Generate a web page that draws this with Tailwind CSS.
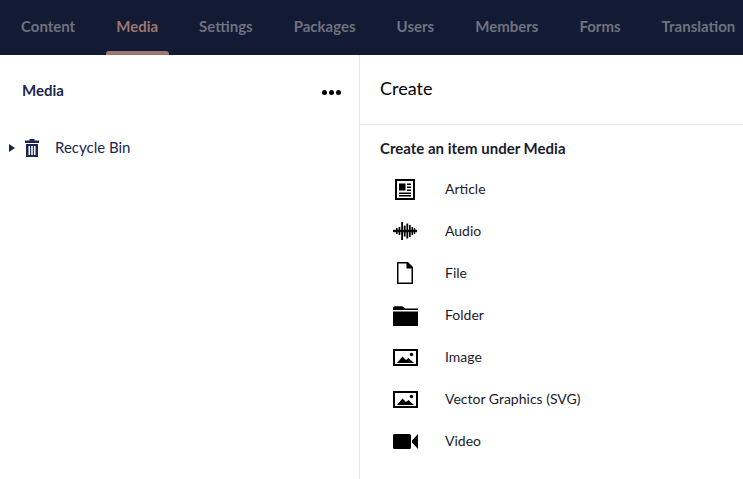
<!DOCTYPE html>
<html lang="en">

<head>
    <meta charset="UTF-8">
    <title>Media</title>
    <script src="https://cdn.jsdelivr.net/npm/@tailwindcss/browser@4"></script>
</head>

<body class="bg-white w-[743px] h-[479px] overflow-hidden font-['Lato',sans-serif] text-[#000000]">

    <!-- Top nav -->
    <nav class="h-[55px] pl-[0.5px] bg-[#131a33] flex text-[15px] font-bold text-[#6f7280] overflow-hidden whitespace-nowrap">
        <a class="px-[20.5px] leading-[52px]">Content</a>
        <a class="relative px-[20.5px] leading-[52px] text-[#9c7670]">Media
            <span class="absolute left-[10px] right-[10px] bottom-0 h-[4px] bg-[#9c7670] rounded-t-[3px]"></span>
        </a>
        <a class="px-[20.5px] leading-[52px]">Settings</a>
        <a class="px-[20.5px] leading-[52px]">Packages</a>
        <a class="px-[20.5px] leading-[52px]">Users</a>
        <a class="px-[20.5px] leading-[52px]">Members</a>
        <a class="px-[20.5px] leading-[52px]">Forms</a>
        <a class="px-[20.5px] leading-[52px]">Translation</a>
    </nav>

    <div class="flex h-[424px]">
        <!-- Tree -->
        <aside class="w-[360px] border-r border-[#e9e9eb] text-[#1b264f]">
            <div class="h-[72px] pl-[22px] pr-[18px] flex items-center justify-between">
                <span class="text-[15px] font-bold mb-[2px]">Media</span>
                <span class="flex gap-[2px] mt-[3px]">
                    <i class="w-[5px] h-[5px] rounded-full bg-black"></i>
                    <i class="w-[5px] h-[5px] rounded-full bg-black"></i>
                    <i class="w-[5px] h-[5px] rounded-full bg-black"></i>
                </span>
            </div>
            <div class="h-[42px] flex items-center pl-[9px]">
                <svg class="w-[6px] h-[8px]" viewBox="0 0 6 8"><path d="M0 0l6 4-6 4z" fill="#1b264f"/></svg>
                <svg class="w-[14px] h-[18px] ml-[10px]" viewBox="0 0 14 18">
                    <path fill="#1b264f" fill-rule="evenodd" d="M4.500 1.500V0h5v1.500H14V4H0V1.500zM1 5h12v13H1zM3.500 7v9h1.600V7zM6.200 7v9h1.600V7zM8.900 7v9h1.600V7z"/>
                </svg>
                <span class="ml-[16px] text-[15px] mb-[2px]">Recycle Bin</span>
            </div>
        </aside>

        <!-- Create panel -->
        <main class="flex-1 min-w-0">
            <div class="h-[70px] border-b border-[#e9e9eb] pl-[20px] flex items-center">
                <h1 class="text-[18px] leading-[66px] mb-[4px]">Create</h1>
            </div>
            <div class="pl-[20px] pt-[13px]">
                <h2 class="text-[15px] font-bold leading-[20px] text-[#1b1b2b]">Create an item under Media</h2>
                <ul class="mt-[10px] text-[14px] text-[#1b1b2b]">
                    <li class="h-[42px] flex items-center">
                        <span class="w-[50px] flex justify-center">
                            <svg class="w-[20px] h-[21px] mt-[1px]" viewBox="0 0 20 21">
                                <path fill-rule="evenodd" d="M0 0h20v21H0zM2 2v17h16V2z"/>
                                <path d="M4 4.500h6.500v7H4zM12 4.500h4V6h-4zM12 7.500h4V9h-4zM12 10.500h4V12h-4zM4 13.500h12V15H4zM4 16h12v1.500H4z"/>
                            </svg>
                        </span>
                        <span class="ml-[15px] mb-[2px]">Article</span>
                    </li>
                    <li class="h-[42px] flex items-center">
                        <span class="w-[50px] flex justify-center">
                            <svg class="w-[24px] h-[18px]" viewBox="0 0 24 18">
                                <path d="M0 7.800h24v2.400H0z"/>
                                <path d="M3 6h1.600v6H3zM5.600 5h1.700v8H5.600zM8.200 0h1.800v18H8.200zM10.800 3.500h1.800v11h-1.800zM13.400 1.500h1.800v15h-1.800zM16 3h1.700v12H16zM18.500 5h1.600v8h-1.600zM20.800 6h1.400v6h-1.400z"/>
                            </svg>
                        </span>
                        <span class="ml-[15px] mb-[2px]">Audio</span>
                    </li>
                    <li class="h-[42px] flex items-center">
                        <span class="w-[50px] flex justify-center">
                            <svg class="w-[16px] h-[22px]" viewBox="0 0 16 22">
                                <path fill-rule="evenodd" d="M0 0h11l5 5v17H0zM1.500 1.500v19h13V6.500h-5v-5z"/>
                                <path d="M11 1l4 4.500h-4z"/>
                            </svg>
                        </span>
                        <span class="ml-[15px] mb-[2px]">File</span>
                    </li>
                    <li class="h-[42px] flex items-center">
                        <span class="w-[50px] flex justify-center">
                            <svg class="w-[25px] h-[20px] mt-[2px]" viewBox="0 0 25 20">
                                <path d="M0 5.500h25V20H0zM0 4V2Q0 .500 2 .300h7q2 .2 3 2.200h13V4z"/>
                            </svg>
                        </span>
                        <span class="ml-[15px] mb-[2px]">Folder</span>
                    </li>
                    <li class="h-[42px] flex items-center">
                        <span class="w-[50px] flex justify-center">
                            <svg class="w-[25px] h-[17px] mt-[1px]" viewBox="0 0 25 17">
                                <path fill-rule="evenodd" d="M0 0h25v17H0zM2 2v13h21V2z"/>
                                <path d="M4 14l5.500-6.500 3.500 3.500 2.500-2 5.500 5z"/>
                                <circle cx="18.500" cy="5.500" r="1.700"/>
                            </svg>
                        </span>
                        <span class="ml-[15px] mb-[2px]">Image</span>
                    </li>
                    <li class="h-[42px] flex items-center">
                        <span class="w-[50px] flex justify-center">
                            <svg class="w-[25px] h-[17px] mt-[1px]" viewBox="0 0 25 17">
                                <path fill-rule="evenodd" d="M0 0h25v17H0zM2 2v13h21V2z"/>
                                <path d="M4 14l5.500-6.500 3.500 3.500 2.500-2 5.500 5z"/>
                                <circle cx="18.500" cy="5.500" r="1.700"/>
                            </svg>
                        </span>
                        <span class="ml-[15px] mb-[2px]">Vector Graphics (SVG)</span>
                    </li>
                    <li class="h-[42px] flex items-center">
                        <span class="w-[50px] flex justify-center">
                            <svg class="w-[25px] h-[15px] mt-[1px]" viewBox="0 0 25 15">
                                <path d="M1.500 0h15q1.500 0 1.500 1.500v12q0 1.500-1.500 1.500h-15Q0 15 0 13.500v-12Q0 0 1.500 0zM19 6.500L25 0v15l-6-6.500z"/>
                            </svg>
                        </span>
                        <span class="ml-[15px] mb-[2px]">Video</span>
                    </li>
                </ul>
            </div>
        </main>
    </div>

</body>

</html>
